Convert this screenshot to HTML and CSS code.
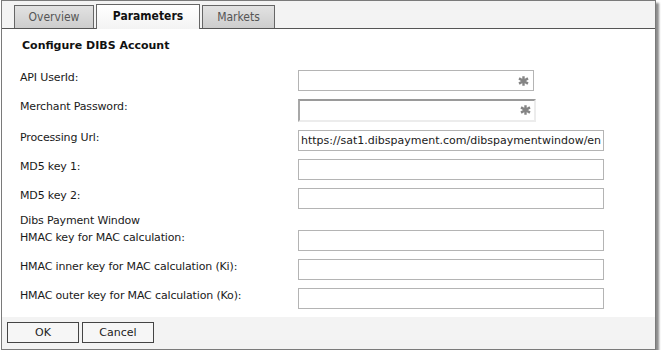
FILE: index.html
```html
<!DOCTYPE html>
<html lang="en">
<head>
    <meta charset="UTF-8">
    <title>Configure DIBS Account</title>
    <link rel="stylesheet" href="styles.css">
</head>
<body>
    <div class="dialog">
        <div class="tabs">
            <div class="tab tab-overview">Overview</div>
            <div class="tab tab-params active">Parameters</div>
            <div class="tab tab-markets">Markets</div>
        </div>

        <div class="panel">
            <h3>Configure DIBS Account</h3>

            <div class="row">
                <label>API UserId:</label>
                <div class="field">
                    <input type="text" class="short">
                    <svg class="star" width="11" height="10" viewBox="0 0 11 10"><path d="M5.5 0.3V9.7M1 2.4L10 7.6M1 7.6L10 2.4" stroke="#858585" stroke-width="2.4"/></svg>
                </div>
            </div>

            <div class="row">
                <label>Merchant Password:</label>
                <div class="field">
                    <input type="password" class="short inset">
                    <svg class="star" width="11" height="10" viewBox="0 0 11 10"><path d="M5.5 0.3V9.7M1 2.4L10 7.6M1 7.6L10 2.4" stroke="#858585" stroke-width="2.4"/></svg>
                </div>
            </div>

            <div class="row">
                <label>Processing Url:</label>
                <input type="text" value="https://sat1.dibspayment.com/dibspaymentwindow/en">
            </div>

            <div class="row">
                <label>MD5 key 1:</label>
                <input type="text">
            </div>

            <div class="row">
                <label>MD5 key 2:</label>
                <input type="text">
            </div>

            <div class="section">Dibs Payment Window</div>

            <div class="row">
                <label>HMAC key for MAC calculation:</label>
                <input type="text">
            </div>

            <div class="row">
                <label>HMAC inner key for MAC calculation (Ki):</label>
                <input type="text">
            </div>

            <div class="row">
                <label>HMAC outer key for MAC calculation (Ko):</label>
                <input type="text">
            </div>
        </div>

        <div class="footer">
            <button type="button">OK</button>
            <button type="button">Cancel</button>
        </div>
    </div>
</body>
</html>
```

FILE: styles.css
```css
body {
    margin: 0;
    padding: 0;
    background-color: white;
    font-family: "DejaVu Sans", sans-serif;
    font-size: 11px;
    color: #1a1a1a;
}

.dialog {
    box-sizing: border-box;
    margin-left: 1px;
    width: 655px;
    height: 350px;
    border: 1px solid #7a7a7a;
    box-shadow: 3px 3px 2px rgba(0, 0, 0, 0.45);
    display: flex;
    flex-direction: column;
    background-color: white;
}

.tabs {
    box-sizing: border-box;
    height: 28px;
    background-color: #f3f3f3;
    border-bottom: 1px solid #555;
    display: flex;
    align-items: flex-end;
    gap: 2px;
    padding-left: 12px;
}

.tab {
    box-sizing: border-box;
    height: 23px;
    border: 1px solid #666;
    border-bottom: none;
    background: linear-gradient(#e2e2e2, #cdcdcd);
    color: #555;
    font-family: "DejaVu Sans Condensed", "DejaVu Sans", sans-serif;
    font-stretch: condensed;
    font-size: 12px;
    line-height: 22px;
    text-align: center;
}

.tab-overview { width: 80px; }
.tab-params { width: 104px; }
.tab-markets { width: 73px; }

.tab.active {
    height: 25px;
    margin-bottom: -1px;
    background: linear-gradient(#ffffff, #f3f3f3);
    color: #111;
    font-weight: bold;
    line-height: 23px;
}

.panel {
    flex: 1;
    padding: 9px 0 0 18px;
}

h3 {
    margin: 0 0 17px 2px;
    font-size: 11px;
    line-height: 15px;
    font-weight: bold;
    color: #111;
}

.row {
    display: flex;
    align-items: flex-start;
    margin-bottom: 8px;
}

.row label,
.section {
    letter-spacing: -0.15px;
}

.row label {
    width: 278px;
    line-height: 15px;
}

.section {
    margin: -4px 0 2px 0;
    line-height: 15px;
}

.field {
    position: relative;
}

input {
    box-sizing: border-box;
    width: 306px;
    height: 21px;
    margin: 0;
    padding: 0 2px;
    border: 1px solid #b4b4b4;
    font-family: inherit;
    font-size: 11px;
    color: #1a1a1a;
    outline: none;
}

input.short {
    width: 236px;
}

input.inset {
    width: 238px;
    height: 23px;
    border-top: 2px solid #9a9a9a;
    border-left: 2px solid #a8a8a8;
    border-right: 2px solid #ececec;
    border-bottom: 2px solid #ececec;
}

.star {
    position: absolute;
    right: 5px;
    top: 6px;
}

.footer {
    height: 33px;
    background-color: #f3f3f3;
    display: flex;
    gap: 3px;
    padding: 5px 0 0 5px;
    box-sizing: border-box;
}

button {
    box-sizing: border-box;
    width: 72px;
    height: 21px;
    border: 1px solid #444;
    background-color: #f6f6f6;
    font-family: inherit;
    font-size: 11px;
    color: #222;
    padding: 0;
}
```
